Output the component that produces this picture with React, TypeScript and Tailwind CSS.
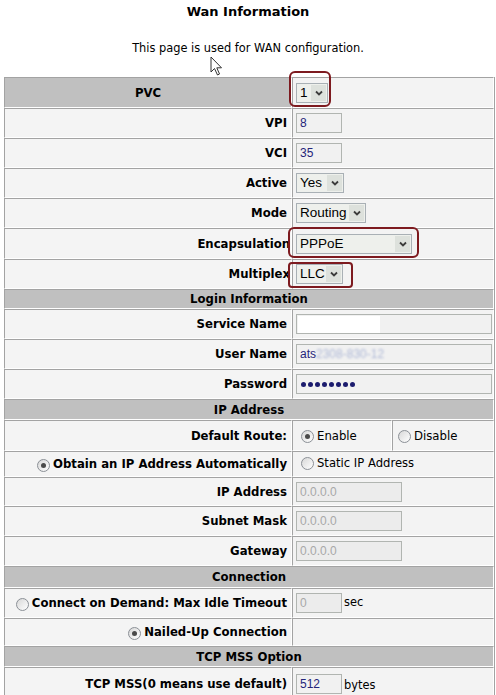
import type { ReactNode } from 'react'

const cell =
  'border border-t-[#a3a3a3] border-l-[#a3a3a3] border-b-white border-r-white'

const Chevron = () => (
  <svg width="8" height="6" viewBox="0 0 8 6" fill="none">
    <path d="M1 1.5 L4 4.5 L7 1.5" stroke="#3c3c3c" strokeWidth="1.8" />
  </svg>
)

const Select = ({ value, w }: { value: string; w: string }) => (
  <div className={`flex items-center h-[20px] border border-[#a9b0b5] bg-[#eef0ec] ${w}`}>
    <span className="flex-1 pl-[3px] text-[13.5px] leading-none text-black font-['Liberation_Sans',Arial,sans-serif]">
      {value}
    </span>
    <span className="w-[15px] h-[16px] mr-[1px] bg-[#dde1dc] flex items-center justify-center">
      <Chevron />
    </span>
  </div>
)

const Input = ({
  value,
  w,
  disabled,
  children,
}: {
  value?: string
  w: string
  disabled?: boolean
  children?: ReactNode
}) => (
  <div
    className={`h-[20px] flex items-center pl-[3px] border border-[#b1b5b1] text-[12px] font-['Liberation_Sans',Arial,sans-serif] ${w} ${
      disabled ? 'bg-[#ececec] text-[#a8a8a8]' : 'bg-[#f1f1f1] text-[#25257a]'
    }`}
  >
    {value}
    {children}
  </div>
)

const Radio = ({ checked }: { checked?: boolean }) => (
  <span className="w-[13px] h-[13px] shrink-0 rounded-full border border-[#8b9096] bg-gradient-to-br from-[#d8d8d8] to-white flex items-center justify-center">
    {checked && <span className="w-[5px] h-[5px] rounded-full bg-[#4a4a4a]" />}
  </span>
)

const Row = ({
  h,
  label,
  children,
  labelClass = 'justify-end pr-[4px]',
}: {
  h: string
  label: ReactNode
  children?: ReactNode
  labelClass?: string
}) => (
  <div className={`flex ${h}`}>
    <div className={`w-[288px] flex items-center gap-[3px] pt-[2px] ${labelClass} ${cell} bg-[#f4f4f4] font-bold text-[11.7px]`}>
      {label}
    </div>
    <div className={`flex-1 flex items-center gap-[2px] pl-[3px] ${cell} bg-[#f3f3f3]`}>{children}</div>
  </div>
)

const Header = ({ h, title }: { h: string; title: string }) => (
  <div className={`flex items-center justify-center pt-[2px] ${h} ${cell} bg-[#c0c0c0] font-bold text-[11.7px]`}>
    {title}
  </div>
)

export default function App() {
  return (
    <div className="relative w-[496px] h-[695px] overflow-hidden bg-white text-black text-[11.4px] font-['DejaVu_Sans',Verdana,sans-serif]">
      <div className="h-[24px] flex items-center justify-center text-[13px] font-bold">Wan Information</div>
      <div className="mt-[15px] h-[20px] flex items-center justify-center">
        This page is used for WAN configuration.
      </div>

      <div className="mt-[18px] ml-[4px] w-[491px] border-r border-[#a3a3a3]">
        <div className="flex h-[31px]">
          <div className={`w-[288px] flex items-center justify-center pt-[2px] ${cell} bg-[#c0c0c0] font-bold text-[11.7px]`}>
            PVC
          </div>
          <div className={`flex-1 flex items-center pl-[3px] ${cell} bg-[#f3f3f3]`}>
            <Select value="1" w="w-[32px]" />
          </div>
        </div>
        <Row h="h-[30px]" label="VPI">
          <Input value="8" w="w-[46px]" />
        </Row>
        <Row h="h-[30px]" label="VCI">
          <Input value="35" w="w-[46px]" />
        </Row>
        <Row h="h-[30px]" label="Active">
          <Select value="Yes" w="w-[48px]" />
        </Row>
        <Row h="h-[30px]" label="Mode">
          <Select value="Routing" w="w-[70px]" />
        </Row>
        <Row h="h-[31px]" label="Encapsulation" labelClass="justify-end pr-[1px]">
          <Select value="PPPoE" w="w-[116px]" />
        </Row>
        <Row h="h-[30px]" label="Multiplex" labelClass="justify-end pr-[1px]">
          <Select value="LLC" w="w-[47px]" />
        </Row>

        <Header h="h-[20px]" title="Login Information" />
        <Row h="h-[30px]" label="Service Name">
          <Input w="w-[196px]">
            <span className="-ml-[2px] h-[17px] w-[82px] bg-white" />
          </Input>
        </Row>
        <Row h="h-[30px]" label="User Name">
          <Input w="w-[196px]">
            <span>ats</span>
            <span className="text-[#aeb8d6] blur-[1px]">2308-830-12</span>
          </Input>
        </Row>
        <Row h="h-[30px]" label="Password">
          <Input w="w-[196px]">
            <span className="flex gap-[2px] pl-[1px]">
              {[0, 1, 2, 3, 4, 5, 6, 7].map(i => (
                <span key={i} className="w-[5px] h-[5px] rounded-full bg-[#1c1c6e]" />
              ))}
            </span>
          </Input>
        </Row>

        <Header h="h-[21px]" title="IP Address" />
        <div className="flex h-[31px]">
          <div className={`w-[288px] flex items-center justify-end pr-[4px] pt-[2px] ${cell} bg-[#f4f4f4] font-bold text-[11.7px]`}>
            Default Route:
          </div>
          <div className={`w-[100px] flex items-center gap-[3px] pl-[8px] pt-[2px] ${cell} bg-[#f3f3f3] text-[11.7px]`}>
            <Radio checked />
            Enable
          </div>
          <div className={`flex-1 flex items-center gap-[3px] pl-[5px] pt-[2px] ${cell} bg-[#f3f3f3] text-[11.7px]`}>
            <Radio />
            Disable
          </div>
        </div>
        <Row
          h="h-[26px]"
          label={
            <>
              <Radio checked />
              Obtain an IP Address Automatically
            </>
          }
        >
          <span className="ml-[5px] flex items-center gap-[3px] text-[11.6px]">
            <Radio />
            Static IP Address
          </span>
        </Row>
        <Row h="h-[29px]" label="IP Address">
          <Input value="0.0.0.0" w="w-[106px]" disabled />
        </Row>
        <Row h="h-[30px]" label="Subnet Mask">
          <Input value="0.0.0.0" w="w-[106px]" disabled />
        </Row>
        <Row h="h-[30px]" label="Gateway">
          <Input value="0.0.0.0" w="w-[106px]" disabled />
        </Row>

        <Header h="h-[22px]" title="Connection" />
        <Row
          h="h-[30px]"
          label={
            <>
              <Radio />
              Connect on Demand: Max Idle Timeout
            </>
          }
        >
          <Input value="0" w="w-[46px]" disabled />
          <span className="text-[11.4px]">sec</span>
        </Row>
        <Row
          h="h-[28px]"
          label={
            <>
              <Radio checked />
              Nailed-Up Connection
            </>
          }
        />

        <Header h="h-[21px]" title="TCP MSS Option" />
        <Row h="h-[34px]" label="TCP MSS(0 means use default)">
          <Input value="512" w="w-[46px]" />
          <span className="text-[11.4px] mt-[3px]">bytes</span>
        </Row>
      </div>

      {/* red annotation boxes */}
      <div className="absolute left-[289px] top-[71px] w-[42px] h-[36px] border-2 border-[#7d1a1f] rounded-[6px]" />
      <div className="absolute left-[288px] top-[227px] w-[131px] h-[31px] border-2 border-[#7d1a1f] rounded-[6px]" />
      <div className="absolute left-[288px] top-[262px] w-[65px] h-[26px] border-2 border-[#7d1a1f] rounded-[4px]" />

      {/* mouse cursor */}
      <svg className="absolute left-[210px] top-[56px]" width="14" height="21" viewBox="0 0 14 21">
        <path
          d="M1 1 L1 16 L4.5 12.5 L7.5 19 L9.5 18 L6.8 11.8 L11.5 11.8 Z"
          fill="white"
          stroke="#333"
          strokeWidth="1"
          strokeLinejoin="miter"
        />
      </svg>
    </div>
  )
}
